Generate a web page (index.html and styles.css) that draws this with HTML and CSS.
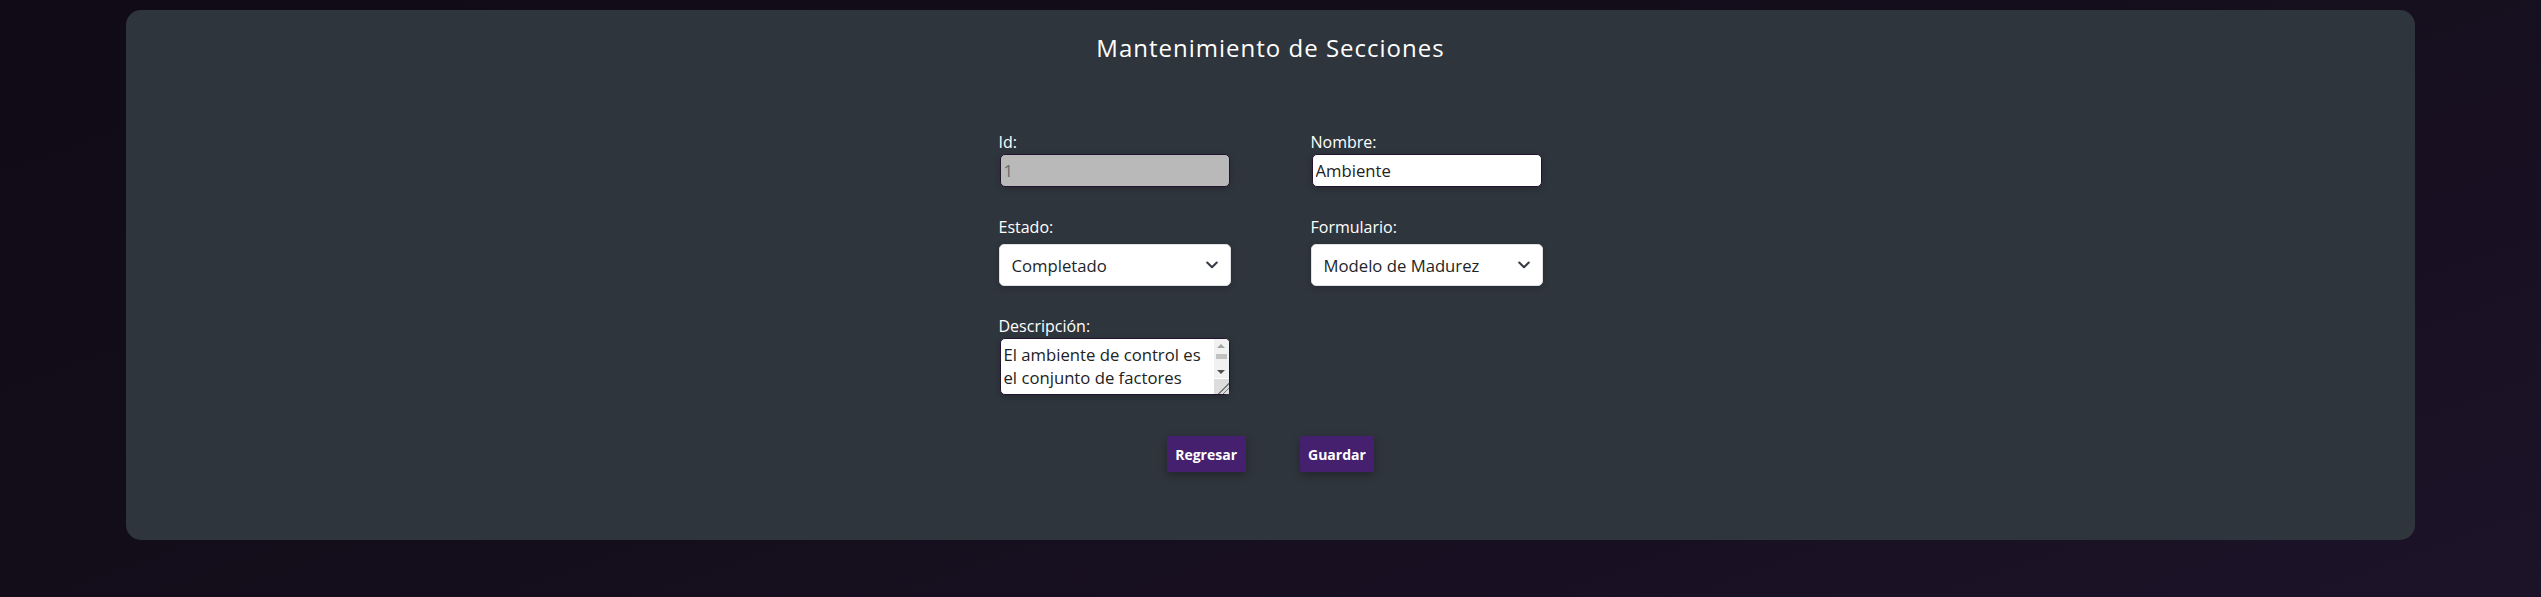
FILE: index.html
```html
<!DOCTYPE html>
<html lang="es">
<head>
<meta charset="utf-8">
<title>Mantenimiento de Secciones</title>
<link rel="stylesheet" href="styles.css">
</head>
<body>
<main class="card">
  <h1 class="title">Mantenimiento de Secciones</h1>
  <form class="form">
    <div class="grid">
      <div class="field">
        <label class="label" for="id">Id:</label>
        <input class="input input-disabled" id="id" type="text" value="1" readonly>
      </div>
      <div class="field">
        <label class="label" for="nombre">Nombre:</label>
        <input class="input" id="nombre" type="text" value="Ambiente">
      </div>
      <div class="field">
        <label class="label" for="estado">Estado:</label>
        <div class="select-wrap">
          <select class="select" id="estado">
            <option>Completado</option>
            <option>Pendiente</option>
          </select>
          <svg class="chevron" width="12" height="8" viewBox="0 0 12 8"><path d="M1.2 1.5 6 6.2l4.8-4.7" fill="none" stroke="#343a40" stroke-width="2" stroke-linecap="round" stroke-linejoin="round"/></svg>
        </div>
      </div>
      <div class="field">
        <label class="label" for="formulario">Formulario:</label>
        <div class="select-wrap">
          <select class="select" id="formulario">
            <option>Modelo de Madurez</option>
          </select>
          <svg class="chevron" width="12" height="8" viewBox="0 0 12 8"><path d="M1.2 1.5 6 6.2l4.8-4.7" fill="none" stroke="#343a40" stroke-width="2" stroke-linecap="round" stroke-linejoin="round"/></svg>
        </div>
      </div>
      <div class="field">
        <label class="label" for="descripcion">Descripción:</label>
        <div class="textarea-wrap">
          <textarea class="textarea" id="descripcion">El ambiente de control es el conjunto de factores organizacionales que proveen la disciplina y la estructura para el funcionamiento del control interno en la organización.</textarea>
          <div class="scrollbar" aria-hidden="true">
            <div class="sb-btn"><span class="arrow-up"></span></div>
            <div class="sb-track"><span class="sb-thumb"></span></div>
            <div class="sb-btn"><span class="arrow-down"></span></div>
          </div>
        </div>
      </div>
    </div>
    <div class="actions">
      <button type="button" class="btn">Regresar</button>
      <button type="button" class="btn">Guardar</button>
    </div>
  </form>
</main>
</body>
</html>
```
FILE: styles.css
```css
html, body {
  margin: 0;
  padding: 0;
}
body {
  min-height: 100vh;
  background: linear-gradient(160deg, #100b16 0%, #140e1c 50%, #1d1329 100%);
  font-family: "Open Sans", "Liberation Sans", sans-serif;
  overflow: hidden;
}
.card {
  width: 2289px;
  margin: 10px auto 0;
  background: #2f353d;
  border-radius: 15px;
  padding: 22px 0 68px;
  box-sizing: border-box;
}
.title {
  margin: 0;
  font-size: 24px;
  line-height: 32px;
  font-weight: 400;
  letter-spacing: 1px;
  color: #ffffff;
  text-align: center;
}
.form {
  margin-top: 68px;
  display: flex;
  flex-direction: column;
  align-items: center;
}
.grid {
  display: grid;
  grid-template-columns: 232px 232px;
  column-gap: 80px;
  row-gap: 30px;
}
.field {
  display: flex;
  flex-direction: column;
  align-items: flex-start;
}
.label {
  font-size: 16px;
  line-height: 20px;
  color: #ffffff;
  margin-bottom: 2px;
}
.input {
  width: 230px;
  height: 33px;
  margin: 0 1px;
  box-sizing: border-box;
  border: 1px solid #22142f;
  border-radius: 5px;
  background: #ffffff;
  padding: 0 3px;
  font-family: inherit;
  font-size: 16.7px;
  color: #222222;
  box-shadow: 0 2px 6px rgba(0, 0, 0, 0.18);
  outline: none;
}
.input-disabled {
  background: #b9b9b9;
  color: #6a6a6a;
}
.select-wrap {
  position: relative;
  margin-top: 5px;
  width: 232px;
}
.select {
  width: 232px;
  height: 42px;
  box-sizing: border-box;
  appearance: none;
  -webkit-appearance: none;
  border: 1px solid #dee2e6;
  border-radius: 5px;
  background: #ffffff;
  padding: 0 36px 0 12px;
  font-family: inherit;
  font-size: 16.7px;
  color: #212529;
  box-shadow: 0 2px 6px rgba(0, 0, 0, 0.2);
  outline: none;
}
.chevron {
  position: absolute;
  right: 13px;
  top: 17px;
  pointer-events: none;
}
.textarea-wrap {
  position: relative;
  width: 230px;
  height: 57px;
  margin: 0 1px;
}
.textarea {
  display: block;
  width: 230px;
  height: 57px;
  margin: 0;
  box-sizing: border-box;
  border: 1px solid #22142f;
  border-radius: 5px;
  background: #ffffff;
  padding: 4px 17px 4px 3px;
  font-family: inherit;
  font-size: 16.7px;
  line-height: 23px;
  color: #222222;
  box-shadow: 0 2px 6px rgba(0, 0, 0, 0.2);
  outline: none;
  overflow: hidden;
}
.textarea::-webkit-resizer {
  background-color: #dcdcdc;
  background-image:
    linear-gradient(135deg, transparent 0 62%, #777 62% 67%, transparent 67% 78%, #777 78% 83%, transparent 83%);
}
.scrollbar {
  position: absolute;
  top: 1px;
  right: 1px;
  width: 15px;
  height: 39px;
  background: #f1f1f1;
  border-top-right-radius: 4px;
  display: flex;
  flex-direction: column;
  pointer-events: none;
}
.sb-btn {
  height: 13px;
  display: flex;
  align-items: center;
  justify-content: center;
}
.arrow-up {
  width: 0;
  height: 0;
  border-left: 4px solid transparent;
  border-right: 4px solid transparent;
  border-bottom: 4px solid #a3a3a3;
}
.arrow-down {
  width: 0;
  height: 0;
  border-left: 4px solid transparent;
  border-right: 4px solid transparent;
  border-top: 4px solid #505050;
}
.sb-track {
  flex: 1;
  display: flex;
  flex-direction: column;
  align-items: center;
  padding-top: 2px;
}
.sb-thumb {
  width: 11px;
  height: 5px;
  background: #c1c1c1;
}
.actions {
  margin-top: 41px;
  display: flex;
  gap: 54px;
}
.btn {
  height: 36px;
  padding: 0 8.5px;
  border: none;
  border-radius: 2px;
  background: #45206f;
  color: #ffffff;
  font-family: inherit;
  font-size: 14px;
  font-weight: 700;
  box-shadow: 0 3px 8px rgba(0, 0, 0, 0.3);
  cursor: pointer;
}
```
